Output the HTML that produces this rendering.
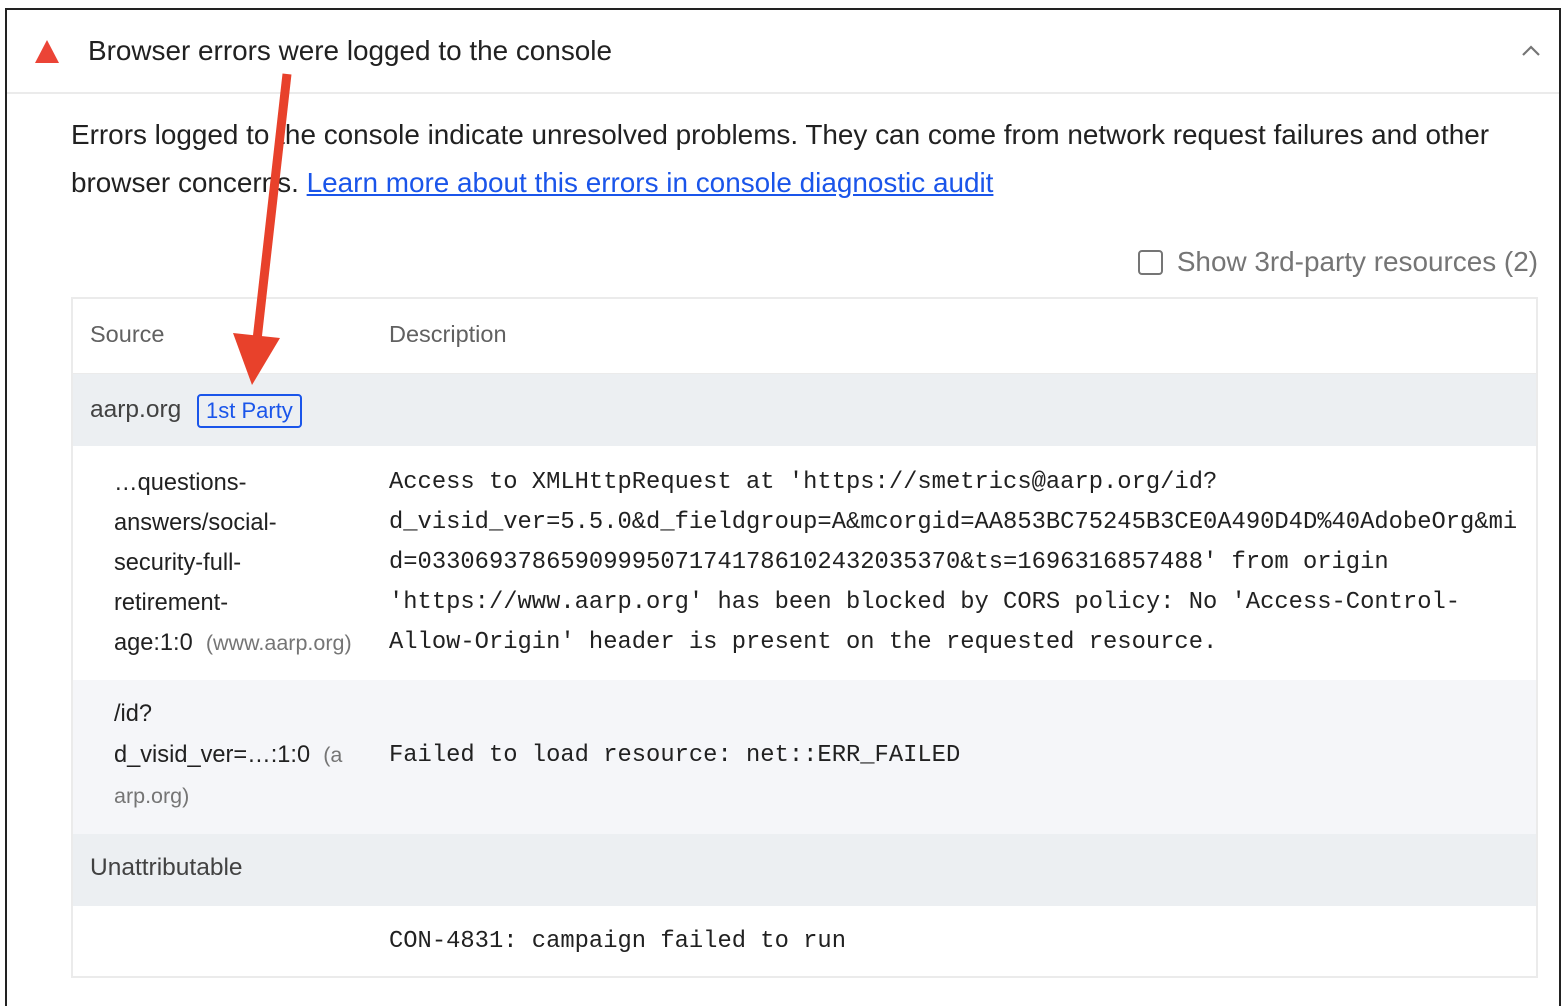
<!DOCTYPE html>
<html><head><meta charset="utf-8"><style>
*{margin:0;padding:0;box-sizing:border-box}
html,body{width:1562px;height:1006px;overflow:hidden}
body{background:#fff;font-family:"Liberation Sans",Arial,sans-serif;color:#212121;position:relative}
.frame{position:absolute;left:5px;top:8px;width:1556px;height:998px;border:2px solid #222;border-bottom:none}
.hdr{position:absolute;left:7px;top:10px;width:1552px;height:84px;border-bottom:2px solid #ebebeb}
.tri{position:absolute;left:35px;top:40px;width:0;height:0;border-left:12px solid transparent;border-right:12px solid transparent;border-bottom:23px solid #eb4436}
.title{position:absolute;left:88px;top:34px;font-size:27.9px;line-height:34px;color:#212121}
.chev{position:absolute;left:1521px;top:44px}
.desc{position:absolute;left:71px;top:111px;width:1480px;font-size:27.9px;line-height:48px;color:#212121}
.desc a{color:#1a55ea;text-decoration:underline}
.tp{position:absolute;right:24px;top:244px;font-size:27.9px;color:#757575;line-height:36px;display:flex;align-items:center}
.cb{width:25px;height:25px;border:2px solid #757575;border-radius:4px;margin-right:14px}
.tbl{position:absolute;left:71px;top:297px;width:1467px;height:681px;border:2px solid #ebebeb;overflow:hidden}
.row{position:absolute;left:0;width:1463px}
.mono{font-family:"Liberation Mono",monospace;font-size:23.8px;color:#212121;line-height:40px}
.src{position:absolute;left:41px;font-size:23.6px;line-height:40px;color:#212121}
.gray{color:#757575;font-size:21.5px}
.d{position:absolute;left:316px}
</style></head><body>
<div class="frame"></div>
<div class="hdr"></div>
<div class="tri"></div>
<div class="title">Browser errors were logged to the console</div>
<svg class="chev" width="20" height="14" viewBox="0 0 20 14"><path d="M2 11 L10 3 L18 11" fill="none" stroke="#757575" stroke-width="2.2"/></svg>
<div class="desc">Errors logged to the console indicate unresolved problems. They can come from network request failures and other browser concerns. <a>Learn more about this errors in console diagnostic audit</a></div>
<div class="tp"><div class="cb"></div>Show 3rd-party resources (2)</div>
<div class="tbl">
 <div class="row" style="top:0;height:75px;background:#fff;border-bottom:1px solid #ebebeb"><div style="position:absolute;left:17px;top:22px;font-size:23.5px;color:#616161">Source</div><div style="position:absolute;left:316px;top:22px;font-size:23.5px;color:#616161">Description</div></div>
 <div class="row" style="top:75px;height:72px;background:#eceff2"><div style="position:absolute;left:17px;top:22px;font-size:24.5px;color:#424242">aarp.org</div><div style="position:absolute;left:124px;top:20px;border:2px solid #1a55ea;border-radius:4px;color:#1a55ea;font-size:22px;padding:0 7px;line-height:30px">1st Party</div></div>
 <div class="row" style="top:147px;height:234px;background:#fff">
  <div class="src" style="top:17px">…questions-<br>answers/social-<br>security-full-<br>retirement-<br>age:1:0 &nbsp;<span class="gray">(www.aarp.org)</span></div>
  <div class="d mono" style="top:17px;white-space:pre">Access to XMLHttpRequest at 'https://smetrics@aarp.org/id?
d_visid_ver=5.5.0&amp;d_fieldgroup=A&amp;mcorgid=AA853BC75245B3CE0A490D4D%40AdobeOrg&amp;mi
d=03306937865909995071741786102432035370&amp;ts=1696316857488' from origin
'https://www.aarp.org' has been blocked by CORS policy: No 'Access-Control-
Allow-Origin' header is present on the requested resource.</div>
 </div>
 <div class="row" style="top:381px;height:154px;background:#f5f6f9">
  <div class="src" style="top:14px;line-height:41px">/id?<br>d_visid_ver=…:1:0 &nbsp;<span class="gray">(a<br>arp.org)</span></div>
  <div class="d mono" style="top:56px">Failed to load resource: net::ERR_FAILED</div>
 </div>
 <div class="row" style="top:535px;height:72px;background:#eceff2"><div style="position:absolute;left:17px;top:20px;font-size:24.5px;color:#424242">Unattributable</div></div>
 <div class="row" style="top:607px;height:72px;background:#fff"><div class="d mono" style="top:16px">CON-4831: campaign failed to run</div></div>
</div>
<svg style="position:absolute;left:0;top:0" width="1562" height="1006">
 <line x1="287" y1="74" x2="257" y2="340" stroke="#e8412b" stroke-width="9"/>
 <polygon points="233,333 280,338 252,385" fill="#e8412b"/>
</svg>
</body></html>
